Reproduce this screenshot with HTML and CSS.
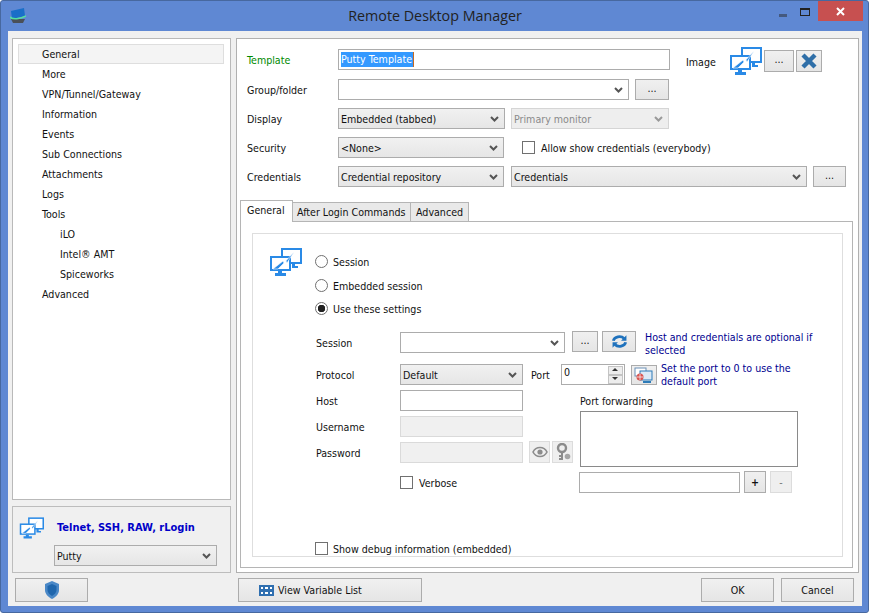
FILE: index.html
```html
<!DOCTYPE html>
<html lang="en">
<head>
<meta charset="utf-8">
<title>Remote Desktop Manager</title>
<link rel="stylesheet" href="styles.css">
</head>
<body>
<svg class="defs" width="0" height="0">
  <symbol id="monitors" viewBox="0 0 33 28">
    <rect x="13" y="1" width="19" height="14" fill="#fff" stroke="#2a8ae6" stroke-width="2"/>
    <path d="M23 15h3v3h3v2h-6z" fill="#2a8ae6"/>
    <rect x="2" y="9" width="19" height="13" fill="#fff" stroke="#2a8ae6" stroke-width="2"/>
    <path d="M4 21l10-8 1 2 10-11-7 11-1-2-8 8z" fill="#2a8ae6" stroke="#fff" stroke-width=".6"/>
    <path d="M9 23h4v2h4v3H6v-3h3z" fill="#2a8ae6"/>
  </symbol>
</svg>
<div class="window">
  <header class="titlebar">
    <svg class="app-icon" width="16" height="15" viewBox="0 0 16 15">
      <path d="M1 11l2 4h10l2-4z" fill="#4a5058"/>
      <path d="M1 3c4-1 9-2 13-3l1 8c-4 1-9 2-13 3z" fill="#1a6fc8"/>
      <path d="M0 9c2 3 11 2 16-1" fill="none" stroke="#55e0a0" stroke-width="1.500"/>
    </svg>
    <h1 class="title">Remote Desktop Manager</h1>
    <div class="controls">
      <span class="ctl-min"></span>
      <span class="ctl-max"></span>
      <span class="ctl-close">
        <svg width="9" height="9" viewBox="0 0 9 9"><path d="M1 1l7 7M8 1l-7 7" stroke="#fff" stroke-width="2"/></svg>
      </span>
    </div>
  </header>
  <div class="client">
    <div class="main">
      <aside class="side">
        <nav class="tree">
          <div class="tree-item selected">General</div>
          <div class="tree-item">More</div>
          <div class="tree-item">VPN/Tunnel/Gateway</div>
          <div class="tree-item">Information</div>
          <div class="tree-item">Events</div>
          <div class="tree-item">Sub Connections</div>
          <div class="tree-item">Attachments</div>
          <div class="tree-item">Logs</div>
          <div class="tree-item">Tools</div>
          <div class="tree-item child">iLO</div>
          <div class="tree-item child">Intel® AMT</div>
          <div class="tree-item child">Spiceworks</div>
          <div class="tree-item">Advanced</div>
        </nav>
        <div class="type-panel">
          <div class="type-head">
            <svg class="type-icon" width="25" height="22"><use href="#monitors"/></svg>
            <span class="type-name">Telnet, SSH, RAW, rLogin</span>
          </div>
          <select class="field select type-select"><option>Putty</option></select>
        </div>
      </aside>
      <section class="content">
        <div class="row row-template">
          <label class="row-label green">Template</label>
          <div class="field text w332"><span class="sel-text">Putty Template</span></div>
          <span class="image-label">Image</span>
          <div class="image-group">
            <svg class="image-icon" width="33" height="28"><use href="#monitors"/></svg>
            <button class="btn btn-image dots">...</button>
            <button class="btn btn-x">
              <svg width="18" height="18" viewBox="0 0 18 18"><path d="M3 3l12 12M15 3L3 15" stroke="#2f6fa8" stroke-width="4.4"/></svg>
            </button>
          </div>
        </div>
        <div class="row row-gap9">
          <label class="row-label">Group/folder</label>
          <select class="field select w291 plain"><option></option></select>
          <button class="btn btn-group dots">...</button>
        </div>
        <div class="row row-gap8">
          <label class="row-label">Display</label>
          <select class="field select w167"><option>Embedded (tabbed)</option></select>
          <select class="field select w158 m6" disabled><option>Primary monitor</option></select>
        </div>
        <div class="row row-gap8">
          <label class="row-label">Security</label>
          <select class="field select w166"><option>&lt;None&gt;</option></select>
          <input class="check check-allow" type="checkbox">
          <span class="check-text">Allow show credentials (everybody)</span>
        </div>
        <div class="row row-gap8">
          <label class="row-label">Credentials</label>
          <select class="field select w166"><option>Credential repository</option></select>
          <select class="field select w296 m7"><option>Credentials</option></select>
          <button class="btn btn-cred dots">...</button>
        </div>
        <div class="tabs">
          <div class="tab active">General</div>
          <div class="tab tab-login">After Login Commands</div>
          <div class="tab tab-adv">Advanced</div>
        </div>
        <div class="tab-page">
          <div class="group">
            <div class="choices">
              <svg class="page-icon" width="33" height="28"><use href="#monitors"/></svg>
              <div class="radios">
                <label class="radio-row"><input class="radio" type="radio" name="s"><span class="opt-text">Session</span></label>
                <label class="radio-row"><input class="radio" type="radio" name="s"><span class="opt-text">Embedded session</span></label>
                <label class="radio-row"><input class="radio" type="radio" name="s" checked><span class="opt-text">Use these settings</span></label>
              </div>
            </div>
            <div class="settings">
              <span class="s-label">Session</span>
              <div class="session-fields">
                <select class="field select w165 plain"><option></option></select>
                <button class="btn btn-s1 dots">...</button>
                <button class="btn btn-s2">
                  <svg width="17" height="15" viewBox="0 0 22 18"><path d="M3 8a8 6.500 0 0 1 14-3" fill="none" stroke="#1f72bd" stroke-width="3.600"/><path d="M20 1v7h-7z" fill="#1f72bd"/><path d="M19 10a8 6.500 0 0 1-14 3" fill="none" stroke="#1f72bd" stroke-width="3.600"/><path d="M2 17v-7h7z" fill="#1f72bd"/></svg>
                </button>
                <p class="hint h-session">Host and credentials are optional if selected</p>
              </div>
              <span class="s-label">Protocol</span>
              <div class="protocol-fields">
                <select class="field select w123"><option>Default</option></select>
                <span class="port-label">Port</span>
                <div class="spin">
                  <span class="spin-value">0</span>
                  <span class="spin-btns"><i class="spin-up"></i><i class="spin-down"></i></span>
                </div>
                <button class="btn btn-port">
                  <svg width="20" height="18" viewBox="0 0 20 18"><rect x="1" y="2" width="11" height="8" fill="#fff" stroke="#6b8fb5"/><rect x="6" y="5" width="12" height="9" fill="#dceaf6" stroke="#2d7bb8"/><path d="M9 15h8v2H9z" fill="#2d7bb8"/><circle cx="6" cy="11" r="3.500" fill="#d9534f"/><path d="M3 11h6M6 8v6" stroke="#fff" stroke-width=".7"/></svg>
                </button>
                <p class="hint h-port">Set the port to 0 to use the default port</p>
              </div>
              <span class="s-label">Host</span>
              <input class="field text w123" type="text">
              <span class="s-label">Username</span>
              <input class="field text w123" type="text" disabled>
              <span class="s-label">Password</span>
              <div class="pass-fields">
                <input class="field text w123" type="text" disabled>
                <button class="btn btn-eye" disabled>
                  <svg width="16" height="12" viewBox="0 0 16 12"><path d="M1 6c3-6 11-6 14 0-3 6-11 6-14 0z" fill="none" stroke="#8c8c8c" stroke-width="1.600"/><circle cx="8" cy="6" r="2.600" fill="#8c8c8c"/></svg>
                </button>
                <button class="btn btn-key" disabled>
                  <svg width="16" height="18" viewBox="0 0 16 18"><circle cx="7" cy="5" r="4" fill="none" stroke="#8c8c8c" stroke-width="2.400"/><path d="M7 9v8M7 13h-3M7 16h-3" stroke="#8c8c8c" stroke-width="2"/><circle cx="12.500" cy="13.500" r="2.800" fill="#a5a5a5"/></svg>
                </button>
              </div>
              <label class="verbose"><input class="check" type="checkbox"><span class="opt-text">Verbose</span></label>
              <div class="forward">
                <span class="forward-title">Port forwarding</span>
                <textarea class="forward-list"></textarea>
                <div class="forward-add">
                  <input class="field text w161" type="text">
                  <button class="btn btn-plus">+</button>
                  <button class="btn btn-minus" disabled>-</button>
                </div>
              </div>
            </div>
            <label class="debug"><input class="check" type="checkbox"><span class="opt-text">Show debug information (embedded)</span></label>
          </div>
        </div>
      </section>
    </div>
    <footer class="footer">
      <button class="btn foot-shield">
        <svg width="16" height="18" viewBox="0 0 16 18"><path d="M8 0l7 3v6c0 4-3 7-7 9-4-2-7-5-7-9V3z" fill="#4a88c7"/><path d="M8 3l4.500 2v4c0 2.500-2 4.500-4.500 6-2.500-1.500-4.500-3.500-4.500-6V5z" fill="#1f66ad"/></svg>
      </button>
      <button class="btn foot-vars">
        <svg width="15" height="11" viewBox="0 0 15 11"><rect width="15" height="11" fill="#2f6fb0"/><path d="M2 2h2v2H2zM6 2h3v2H6zM11 2h2v2h-2zM2 7h2v2H2zM6 7h3v2H6zM11 7h2v2h-2z" fill="#fff"/></svg>
        <span>View Variable List</span>
      </button>
      <button class="btn foot-ok">OK</button>
      <button class="btn foot-cancel">Cancel</button>
    </footer>
  </div>
</div>
</body>
</html>
```
FILE: styles.css
```css
* { box-sizing: border-box; }
html, body { margin: 0; padding: 0; background: #fff; }
body {
  width: 870px;
  height: 614px;
  overflow: hidden;
  font: 10.600px/13px "DejaVu Sans Condensed", "Noto Sans", sans-serif;
  color: #111;
}
.defs { position: absolute; }
.window {
  width: 869px;
  height: 613px;
  background: #5f88d3;
  border: 1px solid #47689f;
  border-radius: 3px;
  padding: 0 6px 6px 7px;
  display: flex;
  flex-direction: column;
}
.titlebar {
  height: 30px;
  flex: none;
  display: flex;
  align-items: flex-start;
  position: relative;
}
.app-icon { margin: 7px 0 0 2px; }
.title {
  position: absolute;
  left: 0;
  right: 0;
  top: 5px;
  margin: 0;
  text-align: center;
  font: 400 14.300px/20px "Open Sans", sans-serif;
  color: #222;
}
.controls {
  margin-left: auto;
  display: flex;
  align-items: flex-start;
  margin-right: -1px;
}
.ctl-min { width: 8px; height: 3px; background: #44597f; margin: 13px 13px 0 0; }
.ctl-max { width: 10px; height: 8px; border: 1px solid #222; border-top-width: 2px; margin: 7px 8px 0 0; }
.ctl-close {
  width: 45px;
  height: 20px;
  background: #c75050;
  display: flex;
  align-items: center;
  justify-content: center;
}
.client {
  flex: 1;
  background: #f0f0f0;
  display: flex;
  flex-direction: column;
}
.main {
  flex: 1;
  display: flex;
  gap: 5px;
  padding: 7px 3px 0 4px;
}
.side { width: 219px; display: flex; flex-direction: column; gap: 6px; }
.tree {
  height: 462px;
  background: #fff;
  border: 1px solid #b9b9b9;
  padding: 5px 6px 0 5px;
}
.tree-item { height: 20px; line-height: 21px; padding-left: 24px; }
.tree-item.selected { background: #f4f4f4; outline: 1px solid #dedede; outline-offset: -1px; }
.tree-item.child { padding-left: 42px; }
.type-panel { height: 67px; border: 1px solid #bdbdbd; padding: 9px 0 0 6px; }
.type-head { display: flex; align-items: center; height: 23px; }
.type-name { margin-left: 13px; font-weight: 700; font-size: 11px; color: #0000c8; }
.content {
  width: 623px;
  background: #fff;
  border: 1px solid #b0b0b0;
  padding: 10px 4px 4px 3px;
  display: flex;
  flex-direction: column;
}
.row { display: flex; align-items: center; height: 21px; flex: none; }
.row-gap9 { margin-top: 9px; }
.row-gap8 { margin-top: 8px; }
.row-label { width: 98px; padding: 2px 0 0 7px; flex: none; }
.green { color: #008a00; }
.field {
  height: 21px;
  border: 1px solid #acacac;
  font: inherit;
  color: inherit;
  background: #fff;
  padding: 0 2px;
  margin: 0;
  outline: none;
  border-radius: 0;
}
.select {
  appearance: none;
  padding: 2px 18px 0 2px;
  background-color: #ececec;
  background-image:
    url("data:image/svg+xml,%3Csvg xmlns='http://www.w3.org/2000/svg' width='9' height='6'%3E%3Cpath d='M1 1l3.500 3.500L8 1' fill='none' stroke='%23555' stroke-width='2'/%3E%3C/svg%3E"),
    linear-gradient(#f1f1f1, #e6e6e6);
  background-repeat: no-repeat;
  background-position: right 5px center, 0 0;
}
.select.plain { background-color: #fff; background-image: url("data:image/svg+xml,%3Csvg xmlns='http://www.w3.org/2000/svg' width='9' height='6'%3E%3Cpath d='M1 1l3.500 3.500L8 1' fill='none' stroke='%23555' stroke-width='2'/%3E%3C/svg%3E"); background-position: right 5px center; }
.select:disabled { color: #8a8a8a; border-color: #d5d5d5; opacity: 1; background-color: #eee; background-image: url("data:image/svg+xml,%3Csvg xmlns='http://www.w3.org/2000/svg' width='9' height='6'%3E%3Cpath d='M1 1l3.500 3.500L8 1' fill='none' stroke='%23999' stroke-width='2'/%3E%3C/svg%3E"); background-position: right 5px center; }
.text:disabled { background: #f0f0f0; border-color: #dadada; }
.type-panel .type-select { width: 163px; margin: 6px 0 0 35px; display: block; }
.w123 { width: 123px; }
.w158 { width: 158px; }
.w161 { width: 161px; }
.w165 { width: 165px; }
.w166 { width: 166px; }
.w167 { width: 167px; }
.w291 { width: 291px; }
.w296 { width: 296px; }
.w332 { width: 332px; }
.m6 { margin-left: 6px; }
.m7 { margin-left: 7px; }
.text { display: flex; align-items: center; }
.sel-text { background: #3399ff; color: #fff; line-height: 15px; padding: 0 1px 0 0; border-right: 1px solid #c86a20; }
.image-label { margin: 5px 0 0 16px; width: 43px; }
.image-group { display: flex; align-items: center; height: 22px; margin-top: 1px; align-self: flex-start; }
.image-icon { flex: none; }
.btn {
  border: 1px solid #acacac;
  background: linear-gradient(#f0f0f0, #e5e5e5);
  font: inherit;
  color: inherit;
  padding: 0;
  margin: 0;
  display: inline-flex;
  align-items: center;
  justify-content: center;
  flex: none;
  border-radius: 0;
}
.btn:disabled { border-color: #dcdcdc; background: #efefef; color: #777; }
.dots { padding-bottom: 3px; }
.btn-image { width: 30px; height: 22px; margin-left: 2px; }
.btn-x { width: 26px; height: 22px; margin-left: 2px; }
.btn-group { width: 34px; height: 21px; margin-left: 6px; }
.check {
  appearance: none;
  width: 13px;
  height: 13px;
  margin: 0;
  border: 1px solid #707070;
  background: #fff;
  flex: none;
  border-radius: 0;
}
.check-allow { margin-left: 18px; }
.check-text { margin-left: 6px; padding-top: 2px; }
.opt-text { padding-top: 2px; }
.btn-cred { width: 33px; height: 21px; margin-left: 6px; }
.tabs { display: flex; align-items: flex-end; height: 21px; margin-top: 13px; flex: none; }
.tab {
  height: 19px;
  padding: 0 0 0 4px;
  line-height: 19px;
  background: #e9e9e9;
  border: 1px solid #b5b5b5;
  border-bottom: 0;
  margin-left: -1px;
}
.tab-login { width: 119px; }
.tab-adv { width: 59px; padding-left: 5px; }
.tab.active {
  height: 22px;
  width: 53px;
  background: #fff;
  line-height: 19px;
  margin: 0 0 -1px;
  position: relative;
  z-index: 1;
  padding: 0 0 0 6px;
}
.tab-page {
  height: 347px;
  flex: none;
  width: 613px;
  border: 1px solid #b5b5b5;
  padding: 11px 9px 10px 11px;
}
.group {
  height: 100%;
  border: 1px solid #dedede;
  padding: 14px 0 0 16px;
  display: flex;
  flex-direction: column;
}
.choices { display: flex; align-items: flex-start; height: 74px; }
.radios { margin: 7px 0 0 13px; display: flex; flex-direction: column; gap: 10px; }
.radio-row { display: flex; align-items: center; height: 13.500px; gap: 5px; }
.radio {
  appearance: none;
  width: 13px;
  height: 13px;
  margin: 0;
  border: 1px solid #707070;
  border-radius: 50%;
  background: #fff;
}
.radio:checked { background: radial-gradient(circle, #222 0 3.500px, #fff 4px); }
.settings {
  margin: 10px 0 0 47px;
  display: grid;
  grid-template-columns: 84px 1fr;
  grid-template-rows: 32px 26px 26px 26px 26px;
  position: relative;
}
.s-label { line-height: 22px; }
.session-fields, .protocol-fields, .pass-fields { display: flex; align-items: flex-start; }
.btn-s1 { width: 26px; height: 21px; margin: -1px 0 0 7px; }
.btn-s2 { width: 34px; height: 21px; margin: -1px 0 0 4px; }
.hint { margin: 0; color: #000090; }
.h-session { width: 180px; margin: -1px 0 0 9px; }
.port-label { margin: 5px 0 0 8px; width: 30px; }
.spin {
  width: 64px;
  height: 21px;
  border: 1px solid #acacac;
  display: flex;
  justify-content: space-between;
  padding: 1px 0 0 2px;
}
.spin-btns { display: flex; flex-direction: column; width: 15px; margin-right: 1px; }
.spin-btns i { height: 9px; background: #ededed; border: 1px solid #c4c4c4; display: block; position: relative; }
.spin-up::after, .spin-down::after {
  content: "";
  position: absolute;
  left: 3px;
  border: 3px solid transparent;
}
.spin-up::after { top: -2px; border-bottom-color: #333; }
.spin-down::after { top: 1px; border-top-color: #333; }
.btn-port { width: 26px; height: 20px; margin: 1px 0 0 6px; }
.h-port { width: 150px; margin: -2px 0 0 4px; }
.btn-eye { width: 21px; height: 22px; margin: -1px 0 0 6px; }
.btn-key { width: 21px; height: 22px; margin: -1px 0 0 2px; }
.verbose { position: absolute; left: 84px; top: 143px; display: flex; align-items: center; gap: 6px; }
.forward {
  position: absolute;
  left: 263px;
  top: 59px;
  display: flex;
  flex-direction: column;
}
.forward-title { height: 20px; margin-left: 1px; padding-top: 4px; }
.forward-list {
  width: 218px;
  height: 56px;
  margin: 0 0 0 1px;
  border: 1px solid #8a8a8a;
  resize: none;
  outline: none;
  display: block;
  padding: 0;
  background: #fff;
}
.forward-add { display: flex; align-items: flex-start; margin-top: 5px; }
.btn-plus { width: 22px; height: 22px; margin: -1px 0 0 4px; font-weight: 700; }
.btn-minus { width: 22px; height: 22px; margin: -1px 0 0 4px; }
.debug { display: flex; align-items: center; gap: 5px; margin-top: auto; margin-bottom: 1px; height: 13px; margin-left: 46px; }
.footer {
  flex: none;
  display: flex;
  height: 33px;
  padding: 5px 8px 4px 7px;
}
.footer .btn { height: 24px; }
.foot-shield { width: 73px; }
.foot-vars { width: 184px; margin-left: 150px; gap: 4px; justify-content: flex-start; padding-left: 20px; }
.foot-ok { width: 73px; margin-left: auto; }
.foot-cancel { width: 73px; margin-left: 7px; }
```
